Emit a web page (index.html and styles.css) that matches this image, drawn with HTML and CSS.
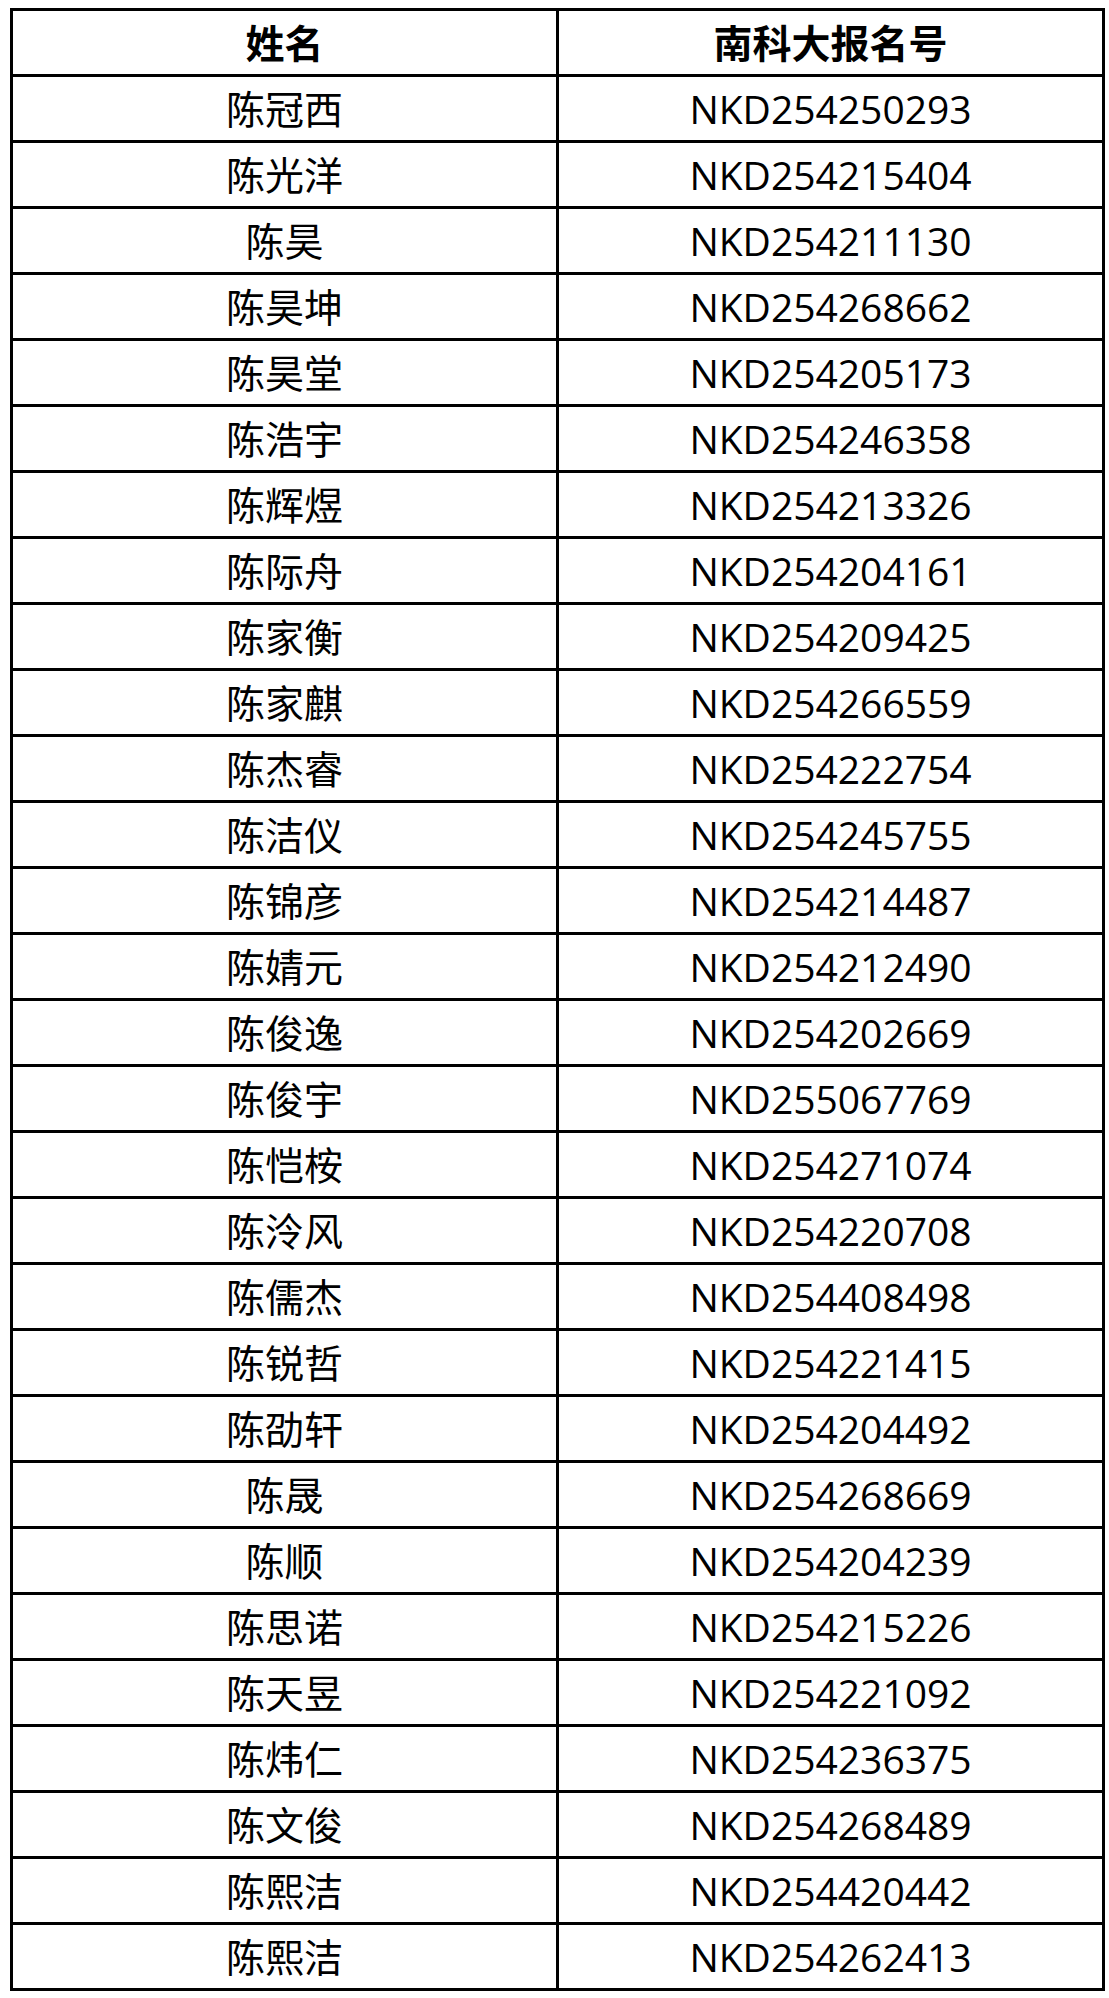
FILE: index.html
```html
<!DOCTYPE html>
<html lang="zh-CN">
<head>
<meta charset="utf-8">
<title>南科大报名号</title>
<link rel="stylesheet" href="styles.css">
</head>
<body>
<div class="sheet" role="table">
  <div class="cell head" role="columnheader">姓名</div><div class="cell head" role="columnheader">南科大报名号</div>
  <div class="cell">陈冠西</div><div class="cell">NKD254250293</div>
  <div class="cell">陈光洋</div><div class="cell">NKD254215404</div>
  <div class="cell">陈昊</div><div class="cell">NKD254211130</div>
  <div class="cell">陈昊坤</div><div class="cell">NKD254268662</div>
  <div class="cell">陈昊堂</div><div class="cell">NKD254205173</div>
  <div class="cell">陈浩宇</div><div class="cell">NKD254246358</div>
  <div class="cell">陈辉煜</div><div class="cell">NKD254213326</div>
  <div class="cell">陈际舟</div><div class="cell">NKD254204161</div>
  <div class="cell">陈家衡</div><div class="cell">NKD254209425</div>
  <div class="cell">陈家麒</div><div class="cell">NKD254266559</div>
  <div class="cell">陈杰睿</div><div class="cell">NKD254222754</div>
  <div class="cell">陈洁仪</div><div class="cell">NKD254245755</div>
  <div class="cell">陈锦彦</div><div class="cell">NKD254214487</div>
  <div class="cell">陈婧元</div><div class="cell">NKD254212490</div>
  <div class="cell">陈俊逸</div><div class="cell">NKD254202669</div>
  <div class="cell">陈俊宇</div><div class="cell">NKD255067769</div>
  <div class="cell">陈恺桉</div><div class="cell">NKD254271074</div>
  <div class="cell">陈泠风</div><div class="cell">NKD254220708</div>
  <div class="cell">陈儒杰</div><div class="cell">NKD254408498</div>
  <div class="cell">陈锐哲</div><div class="cell">NKD254221415</div>
  <div class="cell">陈劭轩</div><div class="cell">NKD254204492</div>
  <div class="cell">陈晟</div><div class="cell">NKD254268669</div>
  <div class="cell">陈顺</div><div class="cell">NKD254204239</div>
  <div class="cell">陈思诺</div><div class="cell">NKD254215226</div>
  <div class="cell">陈天昱</div><div class="cell">NKD254221092</div>
  <div class="cell">陈炜仁</div><div class="cell">NKD254236375</div>
  <div class="cell">陈文俊</div><div class="cell">NKD254268489</div>
  <div class="cell">陈熙洁</div><div class="cell">NKD254420442</div>
  <div class="cell">陈熙洁</div><div class="cell">NKD254262413</div>
</div>
</body>
</html>
```
FILE: styles.css
```css
html, body {
  background: #ffffff;
}
body {
  margin: 0;
  padding: 8px 0 0 10px;
  font-family: "Open Sans", "Noto Sans CJK SC", sans-serif;
  color: #000000;
}
.sheet {
  width: 1095px;
  display: grid;
  grid-template-columns: 1fr 1fr;
  grid-auto-rows: 63px;
  gap: 3px;
  padding: 3px;
  box-sizing: border-box;
  background: #000000;
}
.cell {
  background: #ffffff;
  display: flex;
  align-items: center;
  justify-content: center;
  font-size: 39px;
  line-height: 1;
  white-space: nowrap;
}
.head {
  font-weight: 700;
}
```
